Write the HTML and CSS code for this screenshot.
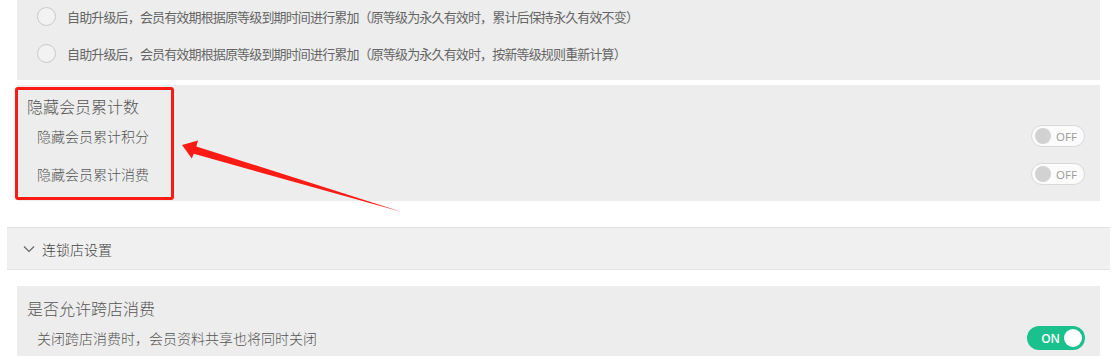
FILE: index.html
```html
<!DOCTYPE html>
<html lang="zh-CN">
<head>
    <meta charset="UTF-8">
    <title>会员设置</title>
    <link rel="stylesheet" href="styles.css">
</head>
<body>
    <div class="page">
        <div class="panel panel-radios">
            <label class="radio-row">
                <span class="radio"></span>
                <span class="radio-text">自助升级后，会员有效期根据原等级到期时间进行累加（原等级为永久有效时，累计后保持永久有效不变）</span>
            </label>
            <label class="radio-row">
                <span class="radio"></span>
                <span class="radio-text">自助升级后，会员有效期根据原等级到期时间进行累加（原等级为永久有效时，按新等级规则重新计算）</span>
            </label>
        </div>

        <div class="panel panel-hide">
            <div class="panel-title">隐藏会员累计数</div>
            <div class="item-row">
                <span class="item-label">隐藏会员累计积分</span>
                <span class="switch"><i class="knob"></i><em>OFF</em></span>
            </div>
            <div class="item-row">
                <span class="item-label">隐藏会员累计消费</span>
                <span class="switch"><i class="knob"></i><em>OFF</em></span>
            </div>
        </div>

        <div class="collapse-head">
            <svg class="chevron" width="12" height="8" viewBox="0 0 12 8">
                <polyline points="1,1.5 6,6.5 11,1.5" fill="none" stroke="#666" stroke-width="1.2"/>
            </svg>
            <span>连锁店设置</span>
        </div>

        <div class="panel panel-chain">
            <div class="panel-title">是否允许跨店消费</div>
            <div class="item-row">
                <span class="item-label">关闭跨店消费时，会员资料共享也将同时关闭</span>
                <span class="switch on"><em>ON</em><i class="knob"></i></span>
            </div>
        </div>

        <!-- annotation drawn over the screenshot -->
        <div class="mark-box"></div>
        <svg class="mark-arrow" width="230" height="80" viewBox="0 0 230 80">
            <polygon points="2,9 18,4.5 16.3,10.4 222,76 13.8,17.8 11.8,22.5" fill="#fb1b14"/>
        </svg>
    </div>
</body>
</html>
```

FILE: styles.css
```css
body {
    margin: 0;
    background: #fff;
    font-family: "Microsoft YaHei", "Noto Sans CJK SC", sans-serif;
    color: #666;
    overflow: hidden;
}
.page {
    position: relative;
    padding: 0 10px 0 7px;
}
.panel {
    margin: 0 10px;
    background: #ededed;
}

/* radio rows */
.panel-radios {
    display: flex;
    flex-direction: column;
    gap: 5px;
    padding: 0 20px 11px;
}
.radio-row {
    display: flex;
    align-items: center;
    height: 32px;
}
.radio {
    width: 17px;
    height: 17px;
    border: 1.5px solid #c9c9c9;
    border-radius: 50%;
    background: #f2f2f2;
    margin-right: 11px;
    flex: none;
}
.radio-text {
    font-size: 13px;
    letter-spacing: -0.85px;
    color: #666;
}

/* hide counts */
.panel-hide {
    margin-top: 5px;
    padding: 10px 15px 8px 10px;
}
.panel-title {
    font-size: 16px;
    line-height: 22px;
    font-weight: 300;
    color: #555;
}
.item-row {
    display: flex;
    align-items: center;
    justify-content: space-between;
    height: 38px;
    padding-left: 10px;
}
.item-label {
    font-size: 14px;
    font-weight: 300;
    color: #555;
}

/* switches */
.switch {
    display: flex;
    align-items: center;
    box-sizing: border-box;
    width: 54px;
    height: 22px;
    border: 1px solid #d9d9d9;
    border-radius: 11px;
    background: #fbfbfb;
    padding: 0 3px;
    gap: 5px;
}
.switch .knob {
    width: 16px;
    height: 16px;
    border-radius: 50%;
    background: #d2d2d2;
}
.switch em {
    font-style: normal;
    font-family: "Open Sans", sans-serif;
    font-size: 11.5px;
    color: #999;
}
.switch.on {
    width: 58px;
    height: 24px;
    border: 0;
    border-radius: 12px;
    background: #1bc18d;
    justify-content: flex-end;
    padding: 0 3px 0 0;
    gap: 4px;
}
.switch.on .knob {
    width: 18px;
    height: 18px;
    background: #fff;
}
.switch.on em {
    color: #fff;
    font-size: 12px;
    font-weight: 600;
}

/* collapse header */
.collapse-head {
    display: flex;
    align-items: center;
    height: 41px;
    margin-top: 26px;
    padding-left: 16px;
    background: #f0f0f0;
    border-top: 1px solid #e2e2e2;
    border-bottom: 1px solid #e2e2e2;
    font-size: 14px;
    font-weight: 300;
    color: #444;
}
.chevron {
    margin-right: 7px;
}

/* chain store */
.panel-chain {
    margin-top: 16px;
    padding: 10px 15px 0 10px;
    height: 80px;
}
.panel-chain .panel-title {
    line-height: 24px;
}
.panel-chain .item-row {
    height: 36px;
}

/* red annotation */
.mark-box {
    position: absolute;
    left: 15px;
    top: 87px;
    width: 153px;
    height: 107px;
    border: 3px solid #fb1b14;
    border-radius: 3px;
}
.mark-arrow {
    position: absolute;
    left: 180px;
    top: 136px;
}
```
